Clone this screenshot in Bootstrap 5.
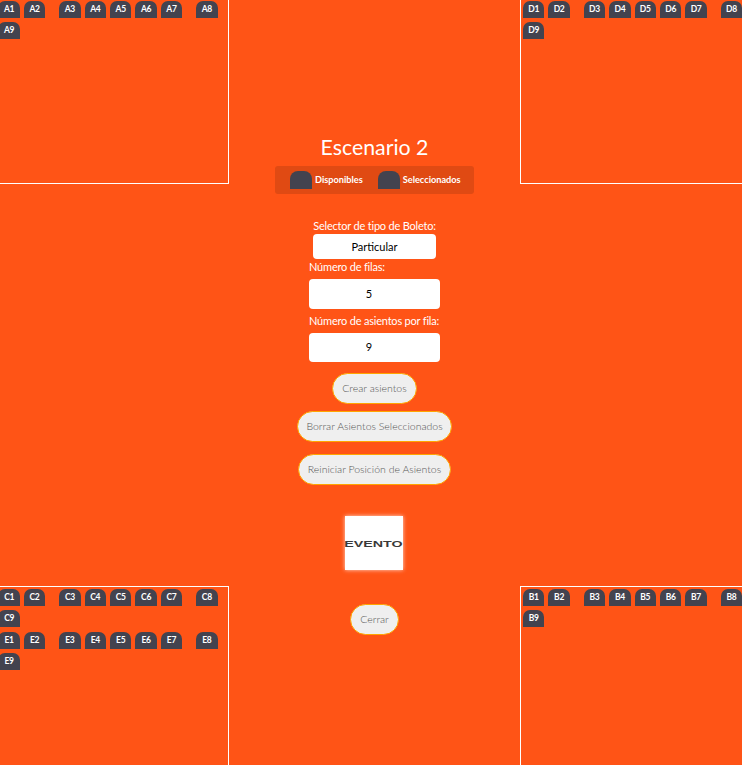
<!DOCTYPE html>
<html lang="es">
<head>
  <meta charset="UTF-8">
  <meta name="viewport" content="width=device-width, initial-scale=1.0">
  <title>Escenario 2</title>
  <link href="https://cdn.jsdelivr.net/npm/bootstrap@5.3.2/dist/css/bootstrap.min.css" rel="stylesheet">
  <style>
    html, body {
      height: 765px;
      overflow: hidden;
    }

    body {
      background: #ff5416;
      font-family: "Lato", "Liberation Sans", sans-serif;
    }

    .stage-grid {
      display: grid;
      grid-template-columns: 229px 291px 222px;
      grid-template-rows: 184px 402px 179px;
      height: 765px;
    }

    .seat-panel {
      width: 234px;
      height: 100%;
      border: 1px solid #fff;
      padding: 1px 2px;
    }

    .panel-top {
      border-top: 0;
      padding-top: 1px;
    }

    .panel-bottom {
      border-bottom: 0;
      padding-top: 2px;
    }

    .panel-left {
      width: 233.6px;
      margin-left: -4.6px;
    }

    .seat-rows {
      display: flex;
      flex-wrap: wrap;
      gap: 4px;
      margin-bottom: 5px;
    }

    .seat-item {
      width: 21.4px;
      height: 17px;
      background: #43434f;
      color: #fff;
      border-radius: 7px 7px 0 0;
      font-size: 8.5px;
      font-weight: 700;
      letter-spacing: -.3px;
      line-height: 17px;
      text-align: center;
    }

    .seat-aisle {
      margin-right: 10px;
    }

    .middle-col {
      grid-column: 2;
      grid-row: 1 / 4;
      padding-top: 134px;
      color: #fff;
    }

    .stage-title {
      font-size: 21.3px;
      line-height: 27px;
      font-weight: 400;
      margin: 0 0 5px;
    }

    .legend-bar {
      width: 199px;
      height: 28px;
      background: #e04a13;
      border-radius: 3px;
      padding: 5px 0 5px 15px;
      font-size: 9.2px;
      font-weight: 700;
      margin-bottom: 25px;
    }

    .legend-seat {
      width: 22px;
      height: 18px;
      background: #43434f;
      border-radius: 8px 8px 0 0;
      margin-right: 3px;
    }

    .legend-gap {
      margin-right: 15px;
    }

    .field-label {
      font-size: 11px;
      line-height: 14px;
      letter-spacing: -.2px;
      white-space: nowrap;
      margin: 0;
    }

    .ticket-select {
      width: 123px;
      height: 25px;
      border: 0;
      border-radius: 4px;
      background: #fff;
      color: #000;
      font-size: 11px;
      text-align: center;
      appearance: none;
      padding: 1px 0 0;
      margin-top: 1px;
      margin-bottom: 1px;
    }

    .label-wide {
      width: 131px;
      margin-bottom: 5px;
    }

    .number-box {
      width: 131px;
      border: 0;
      border-radius: 4px;
      background: #fff;
      color: #000;
      font-size: 11px;
      text-align: center;
      padding: 0 0 2px 4px;
      margin-bottom: 5px;
    }

    .box-a {
      height: 30px;
    }

    .box-b {
      height: 29px;
    }

    .pill-btn {
      height: 31px;
      background: #efefef;
      color: #555;
      border: 1px solid #ffa500;
      border-radius: 16px;
      font-family: "Lato", "Liberation Sans", sans-serif;
      font-size: 10.5px;
      font-weight: 300;
      padding: 0;
    }

    .btn-crear {
      width: 85px;
      margin-top: 6px;
    }

    .btn-borrar {
      width: 155px;
      margin-top: 7px;
    }

    .btn-reiniciar {
      width: 153px;
      margin-top: 12px;
    }

    .btn-cerrar {
      width: 49px;
      margin-top: 34px;
    }

    .event-logo {
      width: 58px;
      height: 54px;
      margin-top: 31px;
      margin-right: 2px;
      background: #fff;
      color: #3a3a3a;
      box-shadow: 0 0 4px rgba(255, 255, 255, .8);
      font-family: "Liberation Sans", sans-serif;
      font-size: 9.5px;
      font-weight: 700;
      padding-top: 2px;
    }

    .logo-word {
      display: inline-block;
      transform: scaleX(1.5);
    }
  </style>
</head>
<body>
  <div class="stage-grid" id="stage">
    <!-- top left -->
    <div class="seat-panel panel-top panel-left" data-rows="A"></div>

    <!-- center column -->
    <div class="middle-col d-flex flex-column align-items-center">
      <h1 class="stage-title">Escenario 2</h1>
      <div class="legend-bar d-flex align-items-center">
        <span class="legend-seat"></span>
        <span class="legend-gap">Disponibles</span>
        <span class="legend-seat"></span>
        <span>Seleccionados</span>
      </div>

      <label class="field-label" for="tipo">Selector de tipo de Boleto:</label>
      <select class="ticket-select" id="tipo">
        <option>Particular</option>
      </select>

      <label class="field-label label-wide" for="filas">Número de filas:</label>
      <input class="number-box box-a" id="filas" type="number" value="5">

      <label class="field-label label-wide" for="asientos">Número de asientos por fila:</label>
      <input class="number-box box-b" id="asientos" type="number" value="9">

      <button class="pill-btn btn-crear" type="button">Crear asientos</button>
      <button class="pill-btn btn-borrar" type="button">Borrar Asientos Seleccionados</button>
      <button class="pill-btn btn-reiniciar" type="button">Reiniciar Posición de Asientos</button>

      <div class="event-logo d-flex align-items-center justify-content-center"><span class="logo-word">EVENTO</span></div>

      <button class="pill-btn btn-cerrar" type="button">Cerrar</button>
    </div>

    <!-- top right -->
    <div class="seat-panel panel-top" data-rows="D"></div>

    <!-- bottom panels -->
    <div class="seat-panel panel-bottom panel-left" data-rows="C,E" style="grid-column: 1; grid-row: 3;"></div>
    <div class="seat-panel panel-bottom" data-rows="B" style="grid-column: 3; grid-row: 3;"></div>
  </div>

  <script>
    // fill every panel with its seat rows
    document.querySelectorAll(".seat-panel").forEach((panel) => {
      panel.dataset.rows.split(",").forEach((letter) => {
        const row = document.createElement("div");
        row.className = "seat-rows";
        for (let i = 1; i <= 9; i++) {
          const seat = document.createElement("div");
          seat.className = "seat-item";
          if (i === 2 || i === 7) seat.classList.add("seat-aisle");
          seat.textContent = letter + i;
          row.appendChild(seat);
        }
        panel.appendChild(row);
      });
    });
  </script>
  <script src="https://cdn.jsdelivr.net/npm/bootstrap@5.3.2/dist/js/bootstrap.bundle.min.js"></script>
</body>
</html>
